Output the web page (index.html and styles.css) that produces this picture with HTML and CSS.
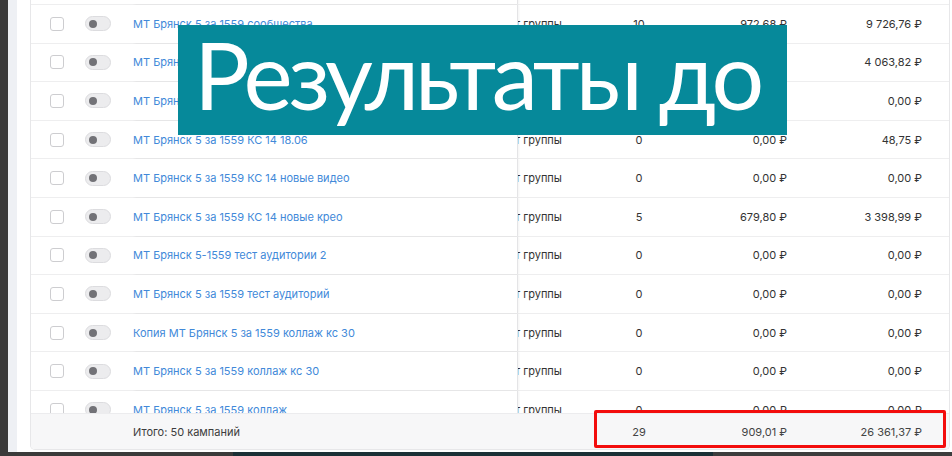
FILE: index.html
```html
<!DOCTYPE html>
<html lang="ru">
<head>
<meta charset="utf-8">
<title>Кампании</title>
<link rel="stylesheet" href="styles.css">
</head>
<body>
<div class="viewport">
  <div class="screen">
    <div class="rail"></div>
    <div class="page">
      <div class="card">
        <div class="scroll">
          <div class="rows">
            <div class="row">
              <div class="c-check"><span class="box"></span></div>
              <div class="c-toggle"><span class="switch"><span class="knob"></span></span></div>
              <div class="c-name"><a class="link">МТ Брянск 5 за 1559 ретаргет</a></div>
              <div class="c-group"><span class="grp">т группы</span></div>
              <div class="c-count">0</div>
              <div class="c-cost">0,00 ₽</div>
              <div class="c-total">0,00 ₽</div>
            </div>
            <div class="row">
              <div class="c-check"><span class="box"></span></div>
              <div class="c-toggle"><span class="switch"><span class="knob"></span></span></div>
              <div class="c-name"><a class="link">МТ Брянск 5 за 1559 сообщества</a></div>
              <div class="c-group"><span class="grp">т группы</span></div>
              <div class="c-count">10</div>
              <div class="c-cost">972,68 ₽</div>
              <div class="c-total">9 726,76 ₽</div>
            </div>
            <div class="row">
              <div class="c-check"><span class="box"></span></div>
              <div class="c-toggle"><span class="switch"><span class="knob"></span></span></div>
              <div class="c-name"><a class="link">МТ Брянск 5 за 1559 КС 14 общая</a></div>
              <div class="c-group"><span class="grp">т группы</span></div>
              <div class="c-count">4</div>
              <div class="c-cost">1 015,96 ₽</div>
              <div class="c-total">4 063,82 ₽</div>
            </div>
            <div class="row">
              <div class="c-check"><span class="box"></span></div>
              <div class="c-toggle"><span class="switch"><span class="knob"></span></span></div>
              <div class="c-name"><a class="link">МТ Брянск 5 за 1559 КС 14 17.06</a></div>
              <div class="c-group"><span class="grp">т группы</span></div>
              <div class="c-count">0</div>
              <div class="c-cost">0,00 ₽</div>
              <div class="c-total">0,00 ₽</div>
            </div>
            <div class="row">
              <div class="c-check"><span class="box"></span></div>
              <div class="c-toggle"><span class="switch"><span class="knob"></span></span></div>
              <div class="c-name"><a class="link">МТ Брянск 5 за 1559 КС 14 18.06</a></div>
              <div class="c-group"><span class="grp">т группы</span></div>
              <div class="c-count">0</div>
              <div class="c-cost">0,00 ₽</div>
              <div class="c-total">48,75 ₽</div>
            </div>
            <div class="row">
              <div class="c-check"><span class="box"></span></div>
              <div class="c-toggle"><span class="switch"><span class="knob"></span></span></div>
              <div class="c-name"><a class="link">МТ Брянск 5 за 1559 КС 14 новые видео</a></div>
              <div class="c-group"><span class="grp">т группы</span></div>
              <div class="c-count">0</div>
              <div class="c-cost">0,00 ₽</div>
              <div class="c-total">0,00 ₽</div>
            </div>
            <div class="row">
              <div class="c-check"><span class="box"></span></div>
              <div class="c-toggle"><span class="switch"><span class="knob"></span></span></div>
              <div class="c-name"><a class="link">МТ Брянск 5 за 1559 КС 14 новые крео</a></div>
              <div class="c-group"><span class="grp">т группы</span></div>
              <div class="c-count">5</div>
              <div class="c-cost">679,80 ₽</div>
              <div class="c-total">3 398,99 ₽</div>
            </div>
            <div class="row">
              <div class="c-check"><span class="box"></span></div>
              <div class="c-toggle"><span class="switch"><span class="knob"></span></span></div>
              <div class="c-name"><a class="link">МТ Брянск 5-1559 тест аудитории 2</a></div>
              <div class="c-group"><span class="grp">т группы</span></div>
              <div class="c-count">0</div>
              <div class="c-cost">0,00 ₽</div>
              <div class="c-total">0,00 ₽</div>
            </div>
            <div class="row">
              <div class="c-check"><span class="box"></span></div>
              <div class="c-toggle"><span class="switch"><span class="knob"></span></span></div>
              <div class="c-name"><a class="link">МТ Брянск 5 за 1559 тест аудиторий</a></div>
              <div class="c-group"><span class="grp">т группы</span></div>
              <div class="c-count">0</div>
              <div class="c-cost">0,00 ₽</div>
              <div class="c-total">0,00 ₽</div>
            </div>
            <div class="row">
              <div class="c-check"><span class="box"></span></div>
              <div class="c-toggle"><span class="switch"><span class="knob"></span></span></div>
              <div class="c-name"><a class="link">Копия МТ Брянск 5 за 1559 коллаж кс 30</a></div>
              <div class="c-group"><span class="grp">т группы</span></div>
              <div class="c-count">0</div>
              <div class="c-cost">0,00 ₽</div>
              <div class="c-total">0,00 ₽</div>
            </div>
            <div class="row">
              <div class="c-check"><span class="box"></span></div>
              <div class="c-toggle"><span class="switch"><span class="knob"></span></span></div>
              <div class="c-name"><a class="link">МТ Брянск 5 за 1559 коллаж кс 30</a></div>
              <div class="c-group"><span class="grp">т группы</span></div>
              <div class="c-count">0</div>
              <div class="c-cost">0,00 ₽</div>
              <div class="c-total">0,00 ₽</div>
            </div>
            <div class="row">
              <div class="c-check"><span class="box"></span></div>
              <div class="c-toggle"><span class="switch"><span class="knob"></span></span></div>
              <div class="c-name"><a class="link">МТ Брянск 5 за 1559 коллаж</a></div>
              <div class="c-group"><span class="grp">т группы</span></div>
              <div class="c-count">0</div>
              <div class="c-cost">0,00 ₽</div>
              <div class="c-total">0,00 ₽</div>
            </div>
          </div>
        </div>
        <div class="row foot">
          <div class="c-check"></div>
          <div class="c-toggle"></div>
          <div class="c-name foot-label">Итого: 50 кампаний</div>
          <div class="c-group"></div>
          <div class="c-count">29</div>
          <div class="c-cost">909,01 ₽</div>
          <div class="c-total">26 361,37 ₽</div>
        </div>
      </div>
    </div>
  </div>
  <div class="bottombar"><span class="seg-a"></span><span class="seg-b"></span><span class="seg-c"></span></div>
  <div class="banner">Результаты до</div>
  <div class="highlight"></div>
</div>
</body>
</html>
```

FILE: styles.css
```css
html, body {
  margin: 0;
  padding: 0;
}
body {
  background: #3a3a3a;
  font-family: "Inter", "Liberation Sans", sans-serif;
  font-size: 11px;
  color: #333;
}
.viewport {
  position: relative;
  width: 952px;
  height: 456px;
  overflow: hidden;
  display: flex;
  flex-direction: column;
  background: #3a3a3a;
}
.screen {
  display: flex;
  height: 452px;
  margin-left: 8px;
}
.rail {
  width: 9px;
  background: #eef0f4;
}
.page {
  flex: 1;
  background: #fff;
  padding: 0 2px 2px 13px;
  display: flex;
  flex-direction: column;
}
.card {
  flex: 1;
  display: flex;
  flex-direction: column;
  border: 1px solid #e7e7e9;
  border-top: 0;
  border-radius: 0 0 5px 5px;
  overflow: hidden;
}
.scroll {
  flex: 1;
  overflow: hidden;
}
.rows {
  margin-top: -33.6px;
}
.row {
  display: flex;
  align-items: stretch;
  height: 38.6px;
  box-sizing: border-box;
  border-bottom: 1px solid #eeeeef;
}
.row > div {
  display: flex;
  align-items: center;
  white-space: nowrap;
}
.c-check {
  width: 48px;
  padding-left: 19px;
  box-sizing: border-box;
}
.box {
  width: 14px;
  height: 14px;
  box-sizing: border-box;
  border: 1.5px solid #cdcdd0;
  border-radius: 3px;
  background: #fff;
}
.c-toggle {
  width: 54px;
  padding-left: 6px;
  box-sizing: border-box;
}
.switch {
  display: flex;
  align-items: center;
  width: 26px;
  height: 15px;
  box-sizing: border-box;
  border: 1px solid #dcdcdf;
  border-radius: 8px;
  background: #ececee;
  padding-left: 3px;
}
.knob {
  width: 8px;
  height: 8px;
  border-radius: 50%;
  background: #727277;
}
.c-name {
  width: 385px;
  box-sizing: border-box;
  border-right: 1px solid #e4e4e6;
  box-shadow: 1px 0 2px rgba(0, 0, 0, 0.05);
  overflow: hidden;
}
.link {
  color: #4189d9;
  text-decoration: none;
}
.c-group {
  width: 81px;
  overflow: hidden;
}
.grp {
  margin-left: -3px;
  color: #333;
}
.c-count {
  width: 80px;
  justify-content: center;
}
.c-cost {
  width: 108px;
  justify-content: flex-end;
}
.c-total {
  width: 135px;
  justify-content: flex-end;
}
.foot {
  height: 36px;
  border-bottom: 0;
  background: #f7f7f8;
  border-top: 1px solid #ececee;
  color: #444;
}
.foot .c-name {
  border-right: 0;
  box-shadow: none;
}
.foot-label {
  color: #3c3c3c;
}
.bottombar {
  display: flex;
  height: 4px;
}
.seg-a {
  width: 233px;
  background: #3a3a3a;
}
.seg-b {
  width: 480px;
  background: #1b3036;
}
.seg-c {
  flex: 1;
  background: #3d3d3d;
}
.banner {
  position: absolute;
  left: 178px;
  top: 25px;
  width: 609px;
  height: 110px;
  box-sizing: border-box;
  padding-left: 16px;
  background: #06899a;
  color: #fff;
  font-family: "Lato", "Open Sans", sans-serif;
  font-weight: 400;
  font-size: 93px;
  line-height: 98px;
  letter-spacing: -4px;
  white-space: nowrap;
  overflow: hidden;
}
.highlight {
  position: absolute;
  left: 594px;
  top: 410px;
  width: 352px;
  height: 38px;
  box-sizing: border-box;
  border: 3px solid #f30d0d;
  border-radius: 2px;
}
```
